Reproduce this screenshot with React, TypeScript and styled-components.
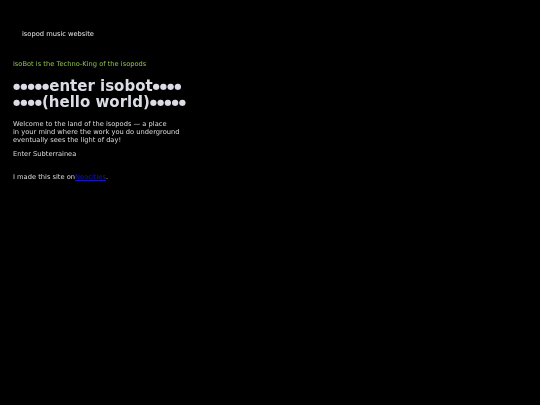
import React from "react";
import styled, { createGlobalStyle } from "styled-components";

const GlobalStyle = createGlobalStyle`
  html, body {
    margin: 0;
    background: #000;
    min-height: 100%;
  }
  body {
    font-family: "DejaVu Sans", Verdana, sans-serif;
    color: #dcdcdc;
    font-size: 6.7px;
    line-height: 8px;
  }
`;

const Page = styled.div`
  padding: 0 13px;
  will-change: transform;
`;

const TopBar = styled.nav`
  padding: 30px 0 0 9px;
  color: #e6e6e6;
`;

const Tagline = styled.p`
  margin: 22px 0 10px;
  color: #8fc34c;
`;

const Heading = styled.h1`
  margin: 0 0 10px;
  font-size: 15px;
  line-height: 16px;
  font-weight: bold;
  color: #dcdce6;
`;

const Dots = styled.span`
  font-size: 8.3px;
  font-weight: normal;
  vertical-align: 2px;
  line-height: 1;
`;

const Para = styled.p<{ $gap?: number }>`
  margin: 0 0 ${(p) => p.$gap ?? 6}px;
`;

const SiteLink = styled.a`
  color: #1414c0;
  text-decoration: underline;
`;

export default function App() {
  return (
    <>
      <GlobalStyle />
      <Page>
        <TopBar>isopod music website</TopBar>
        <Tagline>isoBot is the Techno-King of the isopods</Tagline>
        <Heading>
          <Dots>●●●●●</Dots>enter isobot<Dots>●●●●</Dots>
          <br />
          <Dots>●●●●</Dots>(hello world)<Dots>●●●●●</Dots>
        </Heading>
        <Para>
          Welcome to the land of the isopods — a place
          <br />
          in your mind where the work you do underground
          <br />
          eventually sees the light of day!
        </Para>
        <Para $gap={15}>Enter Subterrainea</Para>
        <Para>
          I made this site on<SiteLink href="#">Neocities</SiteLink>.
        </Para>
      </Page>
    </>
  );
}
